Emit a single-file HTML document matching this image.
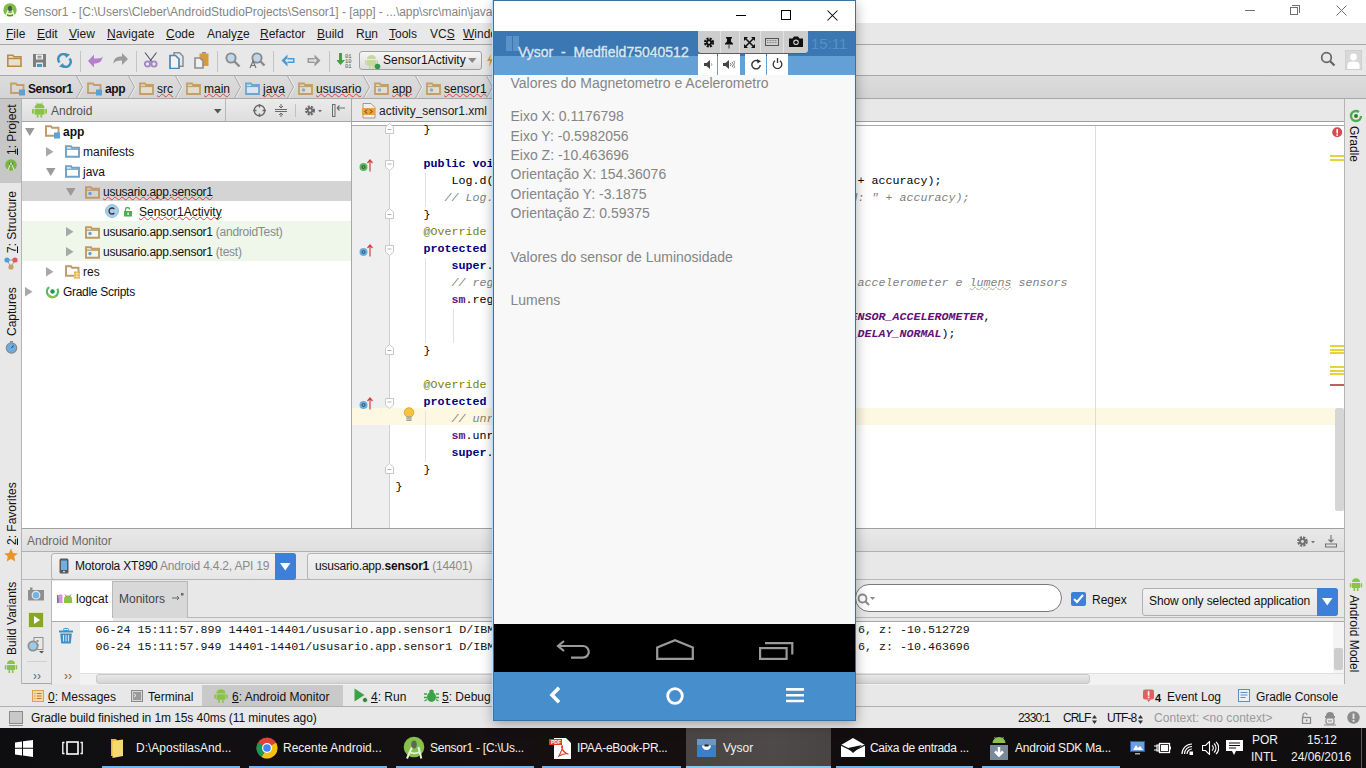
<!DOCTYPE html>
<html><head><meta charset="utf-8">
<style>
*{margin:0;padding:0;box-sizing:border-box}
html,body{width:1366px;height:768px;overflow:hidden;background:#e8e8e8;font-family:"Liberation Sans",sans-serif;font-size:12px;color:#000}
.a{position:absolute}
.t{position:absolute;white-space:pre;line-height:14px}
.u{text-decoration:underline}
.mono{font-family:"Liberation Mono",monospace}
</style></head><body>

<!-- ===== TITLE BAR ===== -->
<div class="a" id="title" style="left:0;top:0;width:1366px;height:23px;background:#fff">
  <svg class="a" style="left:2px;top:3px" width="16" height="16" viewBox="0 0 23 23"><circle cx="11.5" cy="10" r="9.6" fill="#7fbf45"/><path d="M11.5 4c-1.8 0-2.8 1.4-2.8 3.2v4.3h5.6V7.2c0-1.8-1-3.2-2.8-3.2z" fill="#4f5a48"/><path d="M9 10.5L4.5 21M14.5 10.5L18.5 21" stroke="#eef5e6" stroke-width="2"/><path d="M7 14.5Q11.5 17 16.3 14.5" stroke="#eef5e6" stroke-width="2" fill="none"/><path d="M7.5 16Q11.5 18.5 15.5 16v2.5h-8z" fill="#5a6652"/></svg>
  <div class="t" style="left:24px;top:5px;color:#858585;letter-spacing:-0.05px">Sensor1 - [C:\Users\Cleber\AndroidStudioProjects\Sensor1] - [app] - ...\app\src\main\java\ususario\app\sensor1\Sensor1Activity.java - Android Studio 2.1.2</div>
  <div class="a" style="left:1245px;top:10px;width:10px;height:1px;background:#707070"></div>
  <div class="a" style="left:1290px;top:7px;width:8px;height:8px;border:1px solid #707070"></div>
  <div class="a" style="left:1292px;top:5px;width:8px;height:8px;border-top:1px solid #707070;border-right:1px solid #707070"></div>
  <svg class="a" style="left:1336px;top:5px" width="11" height="11"><path d="M0.5 0.5L10.5 10.5M10.5 0.5L0.5 10.5" stroke="#707070" stroke-width="1"/></svg>
</div>

<!-- ===== MENU BAR ===== -->
<div class="a" id="menu" style="left:0;top:23px;width:1366px;height:22px;background:#e8e8e8;border-bottom:1px solid #a8a8a8">
  <div class="t" style="left:6px;top:4px;color:#1a1a1a"><span class="u">F</span>ile</div>
  <div class="t" style="left:37px;top:4px;color:#1a1a1a"><span class="u">E</span>dit</div>
  <div class="t" style="left:69px;top:4px;color:#1a1a1a"><span class="u">V</span>iew</div>
  <div class="t" style="left:107px;top:4px;color:#1a1a1a"><span class="u">N</span>avigate</div>
  <div class="t" style="left:166px;top:4px;color:#1a1a1a"><span class="u">C</span>ode</div>
  <div class="t" style="left:207px;top:4px;color:#1a1a1a">Analy<span class="u">z</span>e</div>
  <div class="t" style="left:260px;top:4px;color:#1a1a1a"><span class="u">R</span>efactor</div>
  <div class="t" style="left:317px;top:4px;color:#1a1a1a"><span class="u">B</span>uild</div>
  <div class="t" style="left:356px;top:4px;color:#1a1a1a">R<span class="u">u</span>n</div>
  <div class="t" style="left:389px;top:4px;color:#1a1a1a"><span class="u">T</span>ools</div>
  <div class="t" style="left:430px;top:4px;color:#1a1a1a">VC<span class="u">S</span></div>
  <div class="t" style="left:463px;top:4px;color:#1a1a1a"><span class="u">W</span>indow</div>
</div>

<!-- ===== TOOLBAR ===== -->
<div class="a" id="toolbar" style="left:0;top:45px;width:1366px;height:31px;background:#e8e8e8;border-bottom:1px solid #a8a8a8">
  <!-- open -->
  <svg class="a" style="left:7px;top:9px" width="15" height="13"><path d="M0.8 1.2h5l1.2 1.6h7v9.4H0.8z" fill="#eadfc8" stroke="#b88c48" stroke-width="1.6"/><path d="M1 4.5h13" stroke="#b88c48" stroke-width="1.4"/></svg>
  <!-- save -->
  <svg class="a" style="left:33px;top:9px" width="13" height="13"><rect x="0" y="0" width="13" height="13" fill="#7d7d7d"/><rect x="3" y="0.5" width="7" height="5" fill="#f2f2f2"/><rect x="4.5" y="1.8" width="4" height="1" fill="#7d7d7d"/><rect x="4.5" y="3.4" width="4" height="1" fill="#7d7d7d"/><rect x="3" y="8.5" width="7" height="4.5" fill="#e8e8e8"/><rect x="4" y="10" width="5" height="3" fill="#4f97b5"/></svg>
  <!-- sync -->
  <svg class="a" style="left:57px;top:8px" width="15" height="15"><path d="M2.5 9.5A5 5 0 0 1 9.5 2.4" stroke="#3f90c0" stroke-width="2.6" fill="none"/><path d="M12.5 5.5A5 5 0 0 1 5.5 12.6" stroke="#3f90c0" stroke-width="2.6" fill="none"/><path d="M8 0l5 1.5-4 3.5z" fill="#3f90c0"/><path d="M7 15l-5-1.5 4-3.5z" fill="#3f90c0"/></svg>
  <div class="a" style="left:80px;top:6px;width:1px;height:21px;background:#c4c4c4"></div>
  <!-- undo -->
  <svg class="a" style="left:88px;top:9px" width="15" height="13"><path d="M0 7l6-6.5v4c5 0 8 0 8.5-2.5c0 5-3 7.5-8.5 7.5v4z" fill="#b47fcf"/></svg>
  <!-- redo -->
  <svg class="a" style="left:113px;top:8px" width="15" height="13"><path d="M15 6l-6-6v3.5C4 3.5 0.5 5 0.5 11C2 8 4.5 7.5 9 7.5V12z" fill="#9b9b9b"/></svg>
  <div class="a" style="left:136px;top:6px;width:1px;height:21px;background:#c4c4c4"></div>
  <!-- cut -->
  <svg class="a" style="left:143px;top:7px" width="16" height="16"><path d="M2 0.5L9.5 10.5M13.5 0.5L6 10.5" stroke="#555" stroke-width="1.1"/><circle cx="4.5" cy="12" r="2.6" fill="none" stroke="#a486c6" stroke-width="1.9"/><circle cx="11" cy="12" r="2.6" fill="none" stroke="#a486c6" stroke-width="1.9"/></svg>
  <!-- copy -->
  <svg class="a" style="left:169px;top:7px" width="15" height="17"><path d="M5 0.8h5.5l3.5 3.5v10h-9z" fill="#e8e8e8" stroke="#8d8d8d" stroke-width="1.5"/><path d="M1 3.5h5.5l3.5 3.5v9.5H1z" fill="#f2f2f2" stroke="#4a86b8" stroke-width="1.7"/></svg>
  <!-- paste -->
  <svg class="a" style="left:194px;top:7px" width="15" height="17"><rect x="5.5" y="1.5" width="9" height="12.5" fill="#d69b3c"/><rect x="8" y="0" width="4" height="1.5" fill="#8d8d8d"/><path d="M1 6h5l3 3v7H1z" fill="#f0f0f0" stroke="#8d8d8d" stroke-width="1.6"/></svg>
  <div class="a" style="left:217px;top:6px;width:1px;height:21px;background:#c4c4c4"></div>
  <!-- find -->
  <svg class="a" style="left:225px;top:7px" width="16" height="16"><circle cx="6" cy="6" r="4.6" fill="#bcd8ea" stroke="#8a8a8a" stroke-width="1.9"/><path d="M9.5 9.5L14.5 14.5" stroke="#8a8a8a" stroke-width="2.4"/></svg>
  <!-- replace -->
  <svg class="a" style="left:249px;top:7px" width="17" height="17"><circle cx="8" cy="6" r="4.6" fill="#bcd8ea" stroke="#8a8a8a" stroke-width="1.9"/><path d="M11.5 9.5L15.5 13.5" stroke="#8a8a8a" stroke-width="2.4"/><path d="M1 16L4 9l3 7M2.2 13.5h3.6" stroke="#707070" stroke-width="1.1" fill="none"/></svg>
  <div class="a" style="left:273px;top:6px;width:1px;height:21px;background:#c4c4c4"></div>
  <!-- back -->
  <svg class="a" style="left:281px;top:9px" width="14" height="13"><path d="M0.5 6.5L6.5 0.5v3.5h7v5h-7v3.5z" fill="#4b9bd0"/><path d="M4 6.5L6.5 4v1.5h5.5v2H6.5V9z" fill="#dfeaf3"/></svg>
  <!-- fwd -->
  <svg class="a" style="left:307px;top:9px" width="14" height="13"><path d="M13.5 6.5L7.5 0.5v3.5h-7v5h7v3.5z" fill="#9a9a9a"/><path d="M10 6.5L7.5 4v1.5H2v2h5.5V9z" fill="#e3e3e3"/></svg>
  <div class="a" style="left:329px;top:6px;width:1px;height:21px;background:#c4c4c4"></div>
  <!-- make -->
  <svg class="a" style="left:337px;top:8px" width="16" height="15"><path d="M2 0h3v7h3l-4.5 5L-1 7h3z" fill="#3aa346"/><text x="8" y="5" font-family="Liberation Mono" font-size="5.5" fill="#555">01</text><text x="8" y="10" font-family="Liberation Mono" font-size="5.5" fill="#555">10</text><text x="8" y="15" font-family="Liberation Mono" font-size="5.5" fill="#555">01</text></svg>
  <!-- run config combo -->
  <div class="a" style="left:359px;top:6px;width:123px;height:19px;border:1px solid #a0a0a0;border-radius:3px;background:linear-gradient(#f6f6f6,#dedede)"></div>
  <svg class="a" style="left:365px;top:8px" width="17" height="17"><path d="M2 6a4.5 4 0 0 1 9 0z" fill="#c6d8a0"/><rect x="2" y="7" width="9" height="6" rx="1" fill="#c6d8a0"/><rect x="0" y="7" width="1.6" height="5" rx="0.8" fill="#c6d8a0"/><rect x="11.4" y="7" width="1.6" height="5" rx="0.8" fill="#c6d8a0"/><rect x="4" y="13" width="1.6" height="3" fill="#c6d8a0"/><rect x="7.4" y="13" width="1.6" height="3" fill="#c6d8a0"/><circle cx="12.5" cy="13.5" r="2.8" fill="#2f9a48"/></svg>
  <div class="t" style="left:383px;top:8px;color:#111">Sensor1Activity</div>
  <svg class="a" style="left:468px;top:13px" width="9" height="6"><path d="M0 0h8.5L4.25 5z" fill="#8a8a8a"/></svg>
  <svg class="a" style="left:486px;top:9px" width="8" height="13"><path d="M5 0L1 7h3l-1 6 4-8H4z" fill="#e0a030"/></svg>
  <!-- right side -->
  <svg class="a" style="left:1320px;top:6px" width="16" height="16"><circle cx="6.5" cy="6.5" r="4.8" fill="none" stroke="#666" stroke-width="1.7"/><path d="M10 10L14.5 14.5" stroke="#666" stroke-width="2.2"/></svg>
  <div class="a" style="left:1345px;top:5px;width:17px;height:20px;background:#d8d8d8;border:1px solid #cfcfcf"></div>
  <svg class="a" style="left:1346px;top:7px" width="15" height="17"><circle cx="7.5" cy="5" r="3.4" fill="#fff"/><path d="M1.5 17v-4c0-2.5 2-3.5 6-3.5s6 1 6 3.5v4z" fill="#fff"/></svg>
</div>

<!-- ===== BREADCRUMB ===== -->
<div class="a" id="crumbs" style="left:0;top:76px;width:1366px;height:23px;background:linear-gradient(#dcdcdc,#d4d4d4);border-bottom:1px solid #a8a8a8">
  <svg class="a" style="left:10px;top:6px" width="16" height="14"><path d="M1 1.5h5l1 1.5h6.5v8H1z" fill="none" stroke="#c39f6b" stroke-width="1.8"/><rect x="9" y="7.5" width="6" height="6" fill="#5aa2d4"/></svg>
  <div class="t" style="left:28px;top:6px;color:#111;font-weight:bold;letter-spacing:-0.4px;">Sensor1</div>
  <svg class="a" style="left:76px;top:0" width="9" height="22"><path d="M0.5 0L6.5 11L0.5 22" stroke="#a9a9a9" stroke-width="1" fill="none"/><path d="M1.8 0L7.8 11L1.8 22" stroke="#eaeaea" stroke-width="1" fill="none"/></svg>
  <svg class="a" style="left:87px;top:6px" width="16" height="14"><path d="M1 1.5h5l1 1.5h6.5v8H1z" fill="none" stroke="#c39f6b" stroke-width="1.8"/><rect x="9" y="7.5" width="6" height="6" fill="#5aa2d4"/></svg>
  <div class="t" style="left:105px;top:6px;color:#111;font-weight:bold;letter-spacing:-0.4px;">app</div>
  <svg class="a" style="left:128px;top:0" width="9" height="22"><path d="M0.5 0L6.5 11L0.5 22" stroke="#a9a9a9" stroke-width="1" fill="none"/><path d="M1.8 0L7.8 11L1.8 22" stroke="#eaeaea" stroke-width="1" fill="none"/></svg>
  <svg class="a" style="left:139px;top:6px" width="16" height="14"><path d="M1 1.5h5l1 1.5h7v9H1z" fill="#e3dcd0" stroke="#c39f6b" stroke-width="1.8"/><path d="M1 4.5h13" stroke="#c39f6b" stroke-width="1.2"/></svg>
  <div class="t" style="left:157px;top:6px;color:#111;text-decoration:underline wavy #e04040;text-decoration-thickness:1px;text-underline-offset:0px;text-decoration-skip-ink:none;">src</div>
  <svg class="a" style="left:175px;top:0" width="9" height="22"><path d="M0.5 0L6.5 11L0.5 22" stroke="#a9a9a9" stroke-width="1" fill="none"/><path d="M1.8 0L7.8 11L1.8 22" stroke="#eaeaea" stroke-width="1" fill="none"/></svg>
  <svg class="a" style="left:186px;top:6px" width="16" height="14"><path d="M1 1.5h5l1 1.5h7v9H1z" fill="#e3dcd0" stroke="#c39f6b" stroke-width="1.8"/><path d="M1 4.5h13" stroke="#c39f6b" stroke-width="1.2"/></svg>
  <div class="t" style="left:204px;top:6px;color:#111;text-decoration:underline wavy #e04040;text-decoration-thickness:1px;text-underline-offset:0px;text-decoration-skip-ink:none;">main</div>
  <svg class="a" style="left:234px;top:0" width="9" height="22"><path d="M0.5 0L6.5 11L0.5 22" stroke="#a9a9a9" stroke-width="1" fill="none"/><path d="M1.8 0L7.8 11L1.8 22" stroke="#eaeaea" stroke-width="1" fill="none"/></svg>
  <svg class="a" style="left:245px;top:6px" width="16" height="14"><path d="M1 1.5h5l1 1.5h7v9H1z" fill="#dde6ee" stroke="#6fa5cf" stroke-width="1.8"/><path d="M1 4.5h13" stroke="#6fa5cf" stroke-width="1.2"/></svg>
  <div class="t" style="left:263px;top:6px;color:#111;text-decoration:underline wavy #e04040;text-decoration-thickness:1px;text-underline-offset:0px;text-decoration-skip-ink:none;">java</div>
  <svg class="a" style="left:287px;top:0" width="9" height="22"><path d="M0.5 0L6.5 11L0.5 22" stroke="#a9a9a9" stroke-width="1" fill="none"/><path d="M1.8 0L7.8 11L1.8 22" stroke="#eaeaea" stroke-width="1" fill="none"/></svg>
  <svg class="a" style="left:298px;top:6px" width="16" height="14"><path d="M1 1.5h5l1 1.5h7v9H1z" fill="#e3dcd0" stroke="#c39f6b" stroke-width="1.8"/><path d="M1 4.5h13" stroke="#c39f6b" stroke-width="1.2"/><circle cx="5.5" cy="8" r="1.8" fill="#7fb0d8"/></svg>
  <div class="t" style="left:316px;top:6px;color:#111;text-decoration:underline wavy #e04040;text-decoration-thickness:1px;text-underline-offset:0px;text-decoration-skip-ink:none;">ususario</div>
  <svg class="a" style="left:363px;top:0" width="9" height="22"><path d="M0.5 0L6.5 11L0.5 22" stroke="#a9a9a9" stroke-width="1" fill="none"/><path d="M1.8 0L7.8 11L1.8 22" stroke="#eaeaea" stroke-width="1" fill="none"/></svg>
  <svg class="a" style="left:374px;top:6px" width="16" height="14"><path d="M1 1.5h5l1 1.5h7v9H1z" fill="#e3dcd0" stroke="#c39f6b" stroke-width="1.8"/><path d="M1 4.5h13" stroke="#c39f6b" stroke-width="1.2"/><circle cx="5.5" cy="8" r="1.8" fill="#7fb0d8"/></svg>
  <div class="t" style="left:392px;top:6px;color:#111;text-decoration:underline wavy #e04040;text-decoration-thickness:1px;text-underline-offset:0px;text-decoration-skip-ink:none;">app</div>
  <svg class="a" style="left:415px;top:0" width="9" height="22"><path d="M0.5 0L6.5 11L0.5 22" stroke="#a9a9a9" stroke-width="1" fill="none"/><path d="M1.8 0L7.8 11L1.8 22" stroke="#eaeaea" stroke-width="1" fill="none"/></svg>
  <svg class="a" style="left:426px;top:6px" width="16" height="14"><path d="M1 1.5h5l1 1.5h7v9H1z" fill="#e3dcd0" stroke="#c39f6b" stroke-width="1.8"/><path d="M1 4.5h13" stroke="#c39f6b" stroke-width="1.2"/><circle cx="5.5" cy="8" r="1.8" fill="#7fb0d8"/></svg>
  <div class="t" style="left:444px;top:6px;color:#111;text-decoration:underline wavy #e04040;text-decoration-thickness:1px;text-underline-offset:0px;text-decoration-skip-ink:none;">sensor1</div>
  <svg class="a" style="left:486px;top:0" width="9" height="22"><path d="M0.5 0L6.5 11L0.5 22" stroke="#a9a9a9" stroke-width="1" fill="none"/><path d="M1.8 0L7.8 11L1.8 22" stroke="#eaeaea" stroke-width="1" fill="none"/></svg>
</div>

<!-- ===== LEFT STRIP ===== -->
<div class="a" id="lstrip" style="left:0;top:99px;width:22px;height:585px;background:#e8e8e8;border-right:1px solid #b4b4b4">
  <div class="a" style="left:0;top:0;width:21px;height:84px;background:#c7c7c7"></div>
  <div class="t" style="left:5px;top:56px;width:47px;transform:rotate(-90deg);transform-origin:0 0;color:#111"><span class="u">1</span>: Project</div>
  <svg class="a" style="left:5px;top:60px" width="12" height="12"><circle cx="6" cy="6" r="5.8" fill="#78b640"/><circle cx="6" cy="4.8" r="1.9" fill="#4a4f45"/><path d="M2.8 11.5L6 3.5l3.2 8" stroke="#e8f0e0" stroke-width="1" fill="none"/></svg>
  <div class="t" style="left:5px;top:154px;width:60px;transform:rotate(-90deg);transform-origin:0 0;color:#111"><span class="u">7</span>: Structure</div>
  <svg class="a" style="left:4px;top:157px" width="14" height="14"><path d="M3 4L11 4M3 4L7 11M11 4L7 11" stroke="#a0a0a0" stroke-width="1"/><circle cx="3" cy="4" r="2.6" fill="#4f9fd8"/><circle cx="11" cy="4" r="2.6" fill="#e05a5a"/><circle cx="7" cy="11" r="2.6" fill="#c8a060"/></svg>
  <div class="t" style="left:5px;top:237px;width:46px;transform:rotate(-90deg);transform-origin:0 0;color:#111">Captures</div>
  <svg class="a" style="left:5px;top:242px" width="13" height="13"><circle cx="6.5" cy="7" r="5.2" fill="#6aaee0" stroke="#8a8a8a" stroke-width="1.2"/><path d="M6.5 7L8.5 4.5" stroke="#333" stroke-width="1"/><rect x="5" y="0" width="3" height="1.5" fill="#8a8a8a"/></svg>
  <div class="t" style="left:5px;top:446px;width:60px;transform:rotate(-90deg);transform-origin:0 0;color:#111"><span class="u">2</span>: Favorites</div>
  <svg class="a" style="left:4px;top:449px" width="14" height="14"><path d="M7 0.5l2 4.5 4.8.4-3.6 3.2 1.1 4.8L7 10.9l-4.3 2.5 1.1-4.8L0.2 5.4 5 5z" fill="#e8952e"/></svg>
  <div class="t" style="left:5px;top:556px;width:72px;transform:rotate(-90deg);transform-origin:0 0;color:#111">Build Variants</div>
  <svg class="a" style="left:4px;top:560px" width="14" height="14"><path d="M3 5a4 3.8 0 0 1 8 0z" fill="#8bc34a"/><rect x="3" y="6" width="8" height="5" fill="#8bc34a"/><rect x="0.8" y="6" width="1.6" height="4.5" rx="0.8" fill="#8bc34a"/><rect x="11.6" y="6" width="1.6" height="4.5" rx="0.8" fill="#8bc34a"/><rect x="4.5" y="11" width="1.6" height="3" fill="#8bc34a"/><rect x="7.9" y="11" width="1.6" height="3" fill="#8bc34a"/></svg>
</div>

<!-- ===== RIGHT STRIP ===== -->
<div class="a" id="rstrip" style="left:1344px;top:99px;width:22px;height:585px;background:#e8e8e8;border-left:1px solid #b4b4b4">
  <svg class="a" style="left:4px;top:10px" width="14" height="14"><circle cx="7" cy="7" r="5" fill="none" stroke="#4cae4f" stroke-width="2.4" stroke-dasharray="26 5"/><circle cx="7" cy="7" r="2" fill="#2e7d32"/></svg>
  <div class="t" style="left:16px;top:27px;width:34px;transform:rotate(90deg);transform-origin:0 0;color:#111">Gradle</div>
  <svg class="a" style="left:4px;top:478px" width="14" height="14"><path d="M3 5a4 3.8 0 0 1 8 0z" fill="#8bc34a"/><rect x="3" y="6" width="8" height="5" fill="#8bc34a"/><rect x="0.8" y="6" width="1.6" height="4.5" rx="0.8" fill="#8bc34a"/><rect x="11.6" y="6" width="1.6" height="4.5" rx="0.8" fill="#8bc34a"/><rect x="4.5" y="11" width="1.6" height="3" fill="#8bc34a"/><rect x="7.9" y="11" width="1.6" height="3" fill="#8bc34a"/></svg>
  <div class="t" style="left:16px;top:496px;width:74px;transform:rotate(90deg);transform-origin:0 0;color:#111">Android Model</div>
</div>

<!-- ===== PROJECT PANEL ===== -->
<div class="a" id="proj" style="left:22px;top:99px;width:330px;height:429px;background:#fff;border-right:1px solid #a8a8a8">
  <div class="a" style="left:0;top:0;width:329px;height:23px;background:linear-gradient(#ebebeb,#dedede);border-bottom:1px solid #a8a8a8"></div>
  <div class="a" style="left:203px;top:0;width:1px;height:22px;background:#b8b8b8"></div>
  <svg class="a" style="left:10px;top:3px" width="15" height="16"><path d="M2.5 6a5 4.6 0 0 1 10 0z" fill="#8bc34a"/><rect x="2.5" y="6.8" width="10" height="6" rx="0.8" fill="#8bc34a"/><rect x="0" y="6.8" width="1.8" height="5" rx="0.9" fill="#8bc34a"/><rect x="13.2" y="6.8" width="1.8" height="5" rx="0.9" fill="#8bc34a"/><rect x="4.8" y="12.5" width="1.8" height="3" fill="#8bc34a"/><rect x="8.4" y="12.5" width="1.8" height="3" fill="#8bc34a"/><path d="M4.5 0.5L5.5 2M10.5 0.5L9.5 2" stroke="#8bc34a" stroke-width="0.8"/></svg>
  <div class="t" style="left:29px;top:5px;color:#505050">Android</div>
  <svg class="a" style="left:192px;top:10px" width="8" height="5"><path d="M0 0h7.5L3.75 4.5z" fill="#555"/></svg>
  <svg class="a" style="left:231px;top:5px" width="13" height="13"><circle cx="6.5" cy="6.5" r="5.3" fill="none" stroke="#6a6a6a" stroke-width="1.4"/><path d="M6.5 0v3.5M6.5 9.5V13M0 6.5h3.5M9.5 6.5H13" stroke="#6a6a6a" stroke-width="1.4"/></svg>
  <svg class="a" style="left:253px;top:5px" width="12" height="13"><path d="M0 5.5h12M0 7.5h12" stroke="#6a6a6a" stroke-width="1"/><path d="M6 0v4M4 2l2 2 2-2M6 13V9M4 11l2-2 2 2" stroke="#6a6a6a" stroke-width="1" fill="none"/></svg>
  <div class="a" style="left:273px;top:5px;width:1px;height:13px;background:#c0c0c0"></div>
  <svg class="a" style="left:282px;top:5px" width="18" height="13"><circle cx="6" cy="6.5" r="3.6" fill="none" stroke="#6a6a6a" stroke-width="2.8" stroke-dasharray="1.9 1"/><circle cx="6" cy="6.5" r="3" fill="#6a6a6a"/><circle cx="6" cy="6.5" r="1.3" fill="#e4e4e4"/><path d="M14 6h4l-2 2.2z" fill="#6a6a6a"/></svg>
  <svg class="a" style="left:310px;top:5px" width="13" height="13"><rect x="0.5" y="0.5" width="2.5" height="12" fill="none" stroke="#6a6a6a" stroke-width="1"/><path d="M5 4h8M5 4l2.5-2.5M5 4l2.5 2.5" stroke="#6a6a6a" stroke-width="1.1" fill="none"/></svg>
  <div class="a" style="left:0;top:82px;width:329px;height:20px;background:#d4d4d4"></div>
  <div class="a" style="left:0;top:122px;width:329px;height:40px;background:#eff6ea"></div>
  <svg class="a" style="left:3px;top:29px" width="10" height="8"><path d="M0 0h9.5L4.75 8z" fill="#9a9a9a"/></svg><svg class="a" style="left:23px;top:26px" width="16" height="14"><path d="M1 1.2h5l1 1.5h6.5v8H1z" fill="none" stroke="#bf9a68" stroke-width="1.9"/><rect x="9" y="7.5" width="6" height="6" fill="#5aa2d4"/></svg><div class="t" style="left:41px;top:26px;color:#111;font-weight:bold">app</div>
  <svg class="a" style="left:24px;top:48px" width="8" height="10"><path d="M0 0v9.5L7.5 4.75z" fill="#a8a8a8"/></svg><svg class="a" style="left:43px;top:46px" width="15" height="13"><path d="M1 1.2h5l1 1.5h7v9H1z" fill="none" stroke="#6fa2c8" stroke-width="1.9"/><path d="M1 4.2h13" stroke="#6fa2c8" stroke-width="1.3"/></svg><div class="t" style="left:61px;top:46px;color:#111;">manifests</div>
  <svg class="a" style="left:24px;top:69px" width="10" height="8"><path d="M0 0h9.5L4.75 8z" fill="#9a9a9a"/></svg><svg class="a" style="left:43px;top:66px" width="15" height="13"><path d="M1 1.2h5l1 1.5h7v9H1z" fill="none" stroke="#6fa2c8" stroke-width="1.9"/><path d="M1 4.2h13" stroke="#6fa2c8" stroke-width="1.3"/></svg><div class="t" style="left:61px;top:66px;color:#111;">java</div>
  <svg class="a" style="left:44px;top:89px" width="10" height="8"><path d="M0 0h9.5L4.75 8z" fill="#9a9a9a"/></svg><svg class="a" style="left:63px;top:87px" width="15" height="13"><path d="M1 1.2h5l1 1.5h7v9H1z" fill="none" stroke="#bf9a68" stroke-width="1.9"/><path d="M1 4.2h13" stroke="#bf9a68" stroke-width="1.3"/><circle cx="5" cy="7.5" r="1.7" fill="#5e9fd3"/></svg><div class="t" style="left:81px;top:86px;color:#111;text-decoration:underline wavy #e04040;text-decoration-thickness:1px;text-underline-offset:0px;text-decoration-skip-ink:none;letter-spacing:-0.25px">ususario.app.sensor1</div>
  <svg class="a" style="left:83px;top:105px" width="14" height="14"><circle cx="7" cy="7" r="6.5" fill="#a7cdef" stroke="#8ab4d8" stroke-width="0.8"/><path d="M9.3 5A3 3 0 1 0 9.3 9" stroke="#333" stroke-width="1.3" fill="none"/></svg><svg class="a" style="left:101px;top:108px" width="10" height="10"><path d="M2.5 4V2.5A2 2 0 0 1 6.5 2.5" stroke="#4caf50" stroke-width="1.3" fill="none"/><rect x="1" y="4" width="8" height="5.5" fill="#4caf50"/><rect x="4.5" y="5.5" width="1.2" height="2.5" fill="#fff"/></svg><div class="t" style="left:117px;top:106px;color:#111;text-decoration:underline wavy #e04040;text-decoration-thickness:1px;text-underline-offset:0px;text-decoration-skip-ink:none;">Sensor1Activity</div>
  <svg class="a" style="left:44px;top:128px" width="8" height="10"><path d="M0 0v9.5L7.5 4.75z" fill="#a8a8a8"/></svg><svg class="a" style="left:63px;top:127px" width="15" height="13"><path d="M1 1.2h5l1 1.5h7v9H1z" fill="none" stroke="#bf9a68" stroke-width="1.9"/><path d="M1 4.2h13" stroke="#bf9a68" stroke-width="1.3"/><circle cx="5" cy="7.5" r="1.7" fill="#5e9fd3"/></svg><div class="t" style="left:81px;top:126px;color:#111;letter-spacing:-0.25px">ususario.app.sensor1<span style="color:#8a8a8a"> (androidTest)</span></div>
  <svg class="a" style="left:44px;top:148px" width="8" height="10"><path d="M0 0v9.5L7.5 4.75z" fill="#a8a8a8"/></svg><svg class="a" style="left:63px;top:147px" width="15" height="13"><path d="M1 1.2h5l1 1.5h7v9H1z" fill="none" stroke="#bf9a68" stroke-width="1.9"/><path d="M1 4.2h13" stroke="#bf9a68" stroke-width="1.3"/><circle cx="5" cy="7.5" r="1.7" fill="#5e9fd3"/></svg><div class="t" style="left:81px;top:146px;color:#111;letter-spacing:-0.25px">ususario.app.sensor1<span style="color:#8a8a8a"> (test)</span></div>
  <svg class="a" style="left:24px;top:168px" width="8" height="10"><path d="M0 0v9.5L7.5 4.75z" fill="#a8a8a8"/></svg><svg class="a" style="left:43px;top:166px" width="16" height="14"><path d="M1 1.2h5l1 1.5h6.5v8H1z" fill="none" stroke="#bf9a68" stroke-width="1.9"/><rect x="9" y="6.5" width="6" height="7" fill="#e0b030"/><path d="M9 9h6M9 11.3h6M12 6.5v7" stroke="#fff6d0" stroke-width="0.7"/></svg><div class="t" style="left:61px;top:166px;color:#111;">res</div>
  <svg class="a" style="left:3px;top:188px" width="8" height="10"><path d="M0 0v9.5L7.5 4.75z" fill="#a8a8a8"/></svg><svg class="a" style="left:23px;top:185px" width="15" height="15"><circle cx="7.5" cy="7.5" r="5.6" fill="none" stroke="#5cb85c" stroke-width="2.2" stroke-dasharray="25 10" transform="rotate(-30 7.5 7.5)"/><path d="M3 11A5.6 5.6 0 0 0 11 12" stroke="#8bc34a" stroke-width="2.2" fill="none"/><circle cx="7.5" cy="7.5" r="2.2" fill="#1a9a4a"/></svg><div class="t" style="left:41px;top:186px;color:#111;letter-spacing:-0.3px">Gradle Scripts</div>
</div>

<!-- ===== EDITOR ===== -->
<div class="a" id="editor" style="left:352px;top:99px;width:992px;height:429px;background:#fff">
  <div class="a" style="left:0;top:0;width:992px;height:23px;background:#e8e8e8;border-bottom:1px solid #a0a0a0"></div>
  <svg class="a" style="left:10px;top:4px" width="14" height="16"><path d="M1 0.5h8l4 4V15H1z" fill="#f0f0f0" stroke="#9a9a9a" stroke-width="1"/><rect x="0" y="5" width="13" height="7" fill="#e8a33c"/><path d="M5 6.5L3 8.5 5 10.5M8 6.5l2 2-2 2" stroke="#333" stroke-width="1" fill="none"/></svg>
  <div class="t" style="left:27px;top:5px;color:#222">activity_sensor1.xml</div>
  <div class="a" style="left:0;top:26px;width:992px;height:1px;background:#a8a8a8"></div>
  <div class="a" style="left:0;top:27px;width:37px;height:402px;background:#efefef"></div>
  <div class="a" style="left:37px;top:27px;width:1px;height:402px;background:#d0d0d0"></div>
  <div class="a" style="left:0;top:309px;width:983px;height:17px;background:#fdf8e2"></div>
  <div class="a" style="left:743px;top:27px;width:1px;height:402px;background:#dcdcdc"></div>
  <div class="a" style="left:101px;top:210px;width:1px;height:34px;background:#e2e2e2"></div>
  <div class="a" style="left:73px;top:74px;width:1px;height:34px;background:#e2e2e2"></div>
  <div class="a" style="left:73px;top:159px;width:1px;height:85px;background:#e2e2e2"></div>
  <div class="a" style="left:73px;top:312px;width:1px;height:51px;background:#e2e2e2"></div>
  <svg class="a" style="left:33px;top:24px" width="10" height="11"><path d="M0.5 10.5h8V4L4.5 0.5 0.5 4z" fill="#fff" stroke="#c8c8c8"/><path d="M2.5 6.5h4" stroke="#b0b0b0"/></svg>
  <svg class="a" style="left:33px;top:61px" width="10" height="11"><path d="M0.5 0.5h8v6.5l-4 3.5-4-3.5z" fill="#fff" stroke="#c8c8c8"/><path d="M2.5 4h4" stroke="#b0b0b0"/></svg>
  <svg class="a" style="left:33px;top:109px" width="10" height="11"><path d="M0.5 10.5h8V4L4.5 0.5 0.5 4z" fill="#fff" stroke="#c8c8c8"/><path d="M2.5 6.5h4" stroke="#b0b0b0"/></svg>
  <svg class="a" style="left:33px;top:146px" width="10" height="11"><path d="M0.5 0.5h8v6.5l-4 3.5-4-3.5z" fill="#fff" stroke="#c8c8c8"/><path d="M2.5 4h4" stroke="#b0b0b0"/></svg>
  <svg class="a" style="left:33px;top:245px" width="10" height="11"><path d="M0.5 10.5h8V4L4.5 0.5 0.5 4z" fill="#fff" stroke="#c8c8c8"/><path d="M2.5 6.5h4" stroke="#b0b0b0"/></svg>
  <svg class="a" style="left:33px;top:299px" width="10" height="11"><path d="M0.5 0.5h8v6.5l-4 3.5-4-3.5z" fill="#fff" stroke="#c8c8c8"/><path d="M2.5 4h4" stroke="#b0b0b0"/></svg>
  <svg class="a" style="left:33px;top:364px" width="10" height="11"><path d="M0.5 10.5h8V4L4.5 0.5 0.5 4z" fill="#fff" stroke="#c8c8c8"/><path d="M2.5 6.5h4" stroke="#b0b0b0"/></svg>
  <svg class="a" style="left:7px;top:60px" width="14" height="13"><circle cx="4.5" cy="8" r="4" fill="#5cb85c"/><circle cx="4.5" cy="8" r="1.5" fill="none" stroke="#333" stroke-width="0.8"/><path d="M11 12.5V1.5M8.5 4l2.5-3 2.5 3" stroke="#d04040" stroke-width="1.2" fill="none"/></svg>
  <svg class="a" style="left:7px;top:145px" width="14" height="13"><circle cx="4.5" cy="8" r="4" fill="#6aaee0"/><circle cx="4.5" cy="8" r="1.5" fill="none" stroke="#333" stroke-width="0.8"/><path d="M11 12.5V1.5M8.5 4l2.5-3 2.5 3" stroke="#d04040" stroke-width="1.2" fill="none"/></svg>
  <svg class="a" style="left:7px;top:298px" width="14" height="13"><circle cx="4.5" cy="8" r="4" fill="#6aaee0"/><circle cx="4.5" cy="8" r="1.5" fill="none" stroke="#333" stroke-width="0.8"/><path d="M11 12.5V1.5M8.5 4l2.5-3 2.5 3" stroke="#d04040" stroke-width="1.2" fill="none"/></svg>
  <svg class="a" style="left:51px;top:308px" width="12" height="15"><circle cx="6" cy="5.5" r="4.8" fill="#f5c242" stroke="#d8a020" stroke-width="0.8"/><rect x="3.5" y="9.5" width="5" height="4.5" fill="#999"/><path d="M3.5 11h5M3.5 12.6h5" stroke="#ddd" stroke-width="0.7"/></svg>
  <div class="t mono" style="left:71.5px;top:23px;line-height:17px;font-size:11.667px;color:#000">}</div>
  <div class="t mono" style="left:71.5px;top:57px;line-height:17px;font-size:11.667px;color:#000080;font-weight:bold">public void</div>
  <div class="t mono" style="left:155.5px;top:57px;line-height:17px;font-size:11.667px;color:#000">onAccuracyChanged(Sensor sensor, </div>
  <div class="t mono" style="left:386.5px;top:57px;line-height:17px;font-size:11.667px;color:#000080;font-weight:bold">int</div>
  <div class="t mono" style="left:414.5px;top:57px;line-height:17px;font-size:11.667px;color:#000">accuracy) {</div>
  <div class="t mono" style="left:99.5px;top:74px;line-height:17px;font-size:11.667px;color:#000">Log.</div>
  <div class="t mono" style="left:127.5px;top:74px;line-height:17px;font-size:11.667px;color:#000">d</div>
  <div class="t mono" style="left:134.5px;top:74px;line-height:17px;font-size:11.667px;color:#000">(</div>
  <div class="t mono" style="left:141.5px;top:74px;line-height:17px;font-size:11.667px;color:#008000;font-weight:bold">"Sensor"</div>
  <div class="t mono" style="left:197.5px;top:74px;line-height:17px;font-size:11.667px;color:#000">, sensor.getName() + </div>
  <div class="t mono" style="left:351.5px;top:74px;line-height:17px;font-size:11.667px;color:#008000;font-weight:bold">"accuracy changed: "</div>
  <div class="t mono" style="left:505.5px;top:74px;line-height:17px;font-size:11.667px;color:#000">+ accuracy);</div>
  <div class="t mono" style="left:92.5px;top:91px;line-height:17px;font-size:11.667px;color:#808080;font-style:italic">// Log.d("Sensor", sensor.getName() + "</div><div class="t mono" style="left:456.5px;top:91px;line-height:17px;font-size:11.667px;color:#808080;font-style:italic">changed: " + accuracy);</div>
  <div class="t mono" style="left:71.5px;top:108px;line-height:17px;font-size:11.667px;color:#000">}</div>
  <div class="t mono" style="left:71.5px;top:125px;line-height:17px;font-size:11.667px;color:#808000">@Override</div>
  <div class="t mono" style="left:71.5px;top:142px;line-height:17px;font-size:11.667px;color:#000080;font-weight:bold">protected void</div>
  <div class="t mono" style="left:176.5px;top:142px;line-height:17px;font-size:11.667px;color:#000">onResume() {</div>
  <div class="t mono" style="left:99.5px;top:159px;line-height:17px;font-size:11.667px;color:#000080;font-weight:bold">super</div>
  <div class="t mono" style="left:134.5px;top:159px;line-height:17px;font-size:11.667px;color:#000">.onResume();</div>
  <div class="t mono" style="left:99.5px;top:176px;line-height:17px;font-size:11.667px;color:#808080;font-style:italic">// registering the listeners for the magnetic field,</div>
  <div class="t mono" style="left:505.5px;top:176px;line-height:17px;font-size:11.667px;color:#808080;font-style:italic">accelerometer e </div>
  <div class="t mono" style="left:617.5px;top:176px;line-height:17px;font-size:11.667px;color:#808080;font-style:italic;text-decoration:underline wavy #a8b4a0;text-decoration-thickness:1px;text-underline-offset:0px;text-decoration-skip-ink:none">lumens</div>
  <div class="t mono" style="left:659.5px;top:176px;line-height:17px;font-size:11.667px;color:#808080;font-style:italic"> sensors</div>
  <div class="t mono" style="left:99.5px;top:193px;line-height:17px;font-size:11.667px;color:#660e7a;font-weight:bold">sm</div>
  <div class="t mono" style="left:113.5px;top:193px;line-height:17px;font-size:11.667px;color:#000">.registerListener(</div>
  <div class="t mono" style="left:239.5px;top:193px;line-height:17px;font-size:11.667px;color:#000080;font-weight:bold">this</div>
  <div class="t mono" style="left:267.5px;top:193px;line-height:17px;font-size:11.667px;color:#000">, sm.getDefaultSensor(Sensor.</div>
  <div class="t mono" style="left:393.5px;top:210px;line-height:17px;font-size:11.667px;color:#000">SensorManager.</div>
  <div class="t mono" style="left:491.5px;top:210px;line-height:17px;font-size:11.667px;color:#660e7a;font-weight:bold;font-style:italic">SENSOR_ACCELEROMETER</div>
  <div class="t mono" style="left:631.5px;top:210px;line-height:17px;font-size:11.667px;color:#000">,</div>
  <div class="t mono" style="left:351.5px;top:227px;line-height:17px;font-size:11.667px;color:#000">SensorManager.</div>
  <div class="t mono" style="left:456.5px;top:227px;line-height:17px;font-size:11.667px;color:#660e7a;font-weight:bold;font-style:italic">SENSOR_DELAY_NORMAL</div>
  <div class="t mono" style="left:589.5px;top:227px;line-height:17px;font-size:11.667px;color:#000">);</div>
  <div class="t mono" style="left:71.5px;top:244px;line-height:17px;font-size:11.667px;color:#000">}</div>
  <div class="t mono" style="left:71.5px;top:278px;line-height:17px;font-size:11.667px;color:#808000">@Override</div>
  <div class="t mono" style="left:71.5px;top:295px;line-height:17px;font-size:11.667px;color:#000080;font-weight:bold">protected void</div>
  <div class="t mono" style="left:176.5px;top:295px;line-height:17px;font-size:11.667px;color:#000">onPause() {</div>
  <div class="t mono" style="left:99.5px;top:312px;line-height:17px;font-size:11.667px;color:#808080;font-style:italic">// unregister listener</div>
  <div class="t mono" style="left:99.5px;top:329px;line-height:17px;font-size:11.667px;color:#660e7a;font-weight:bold">sm</div>
  <div class="t mono" style="left:113.5px;top:329px;line-height:17px;font-size:11.667px;color:#000">.unregisterListener(</div>
  <div class="t mono" style="left:253.5px;top:329px;line-height:17px;font-size:11.667px;color:#000080;font-weight:bold">this</div>
  <div class="t mono" style="left:281.5px;top:329px;line-height:17px;font-size:11.667px;color:#000">);</div>
  <div class="t mono" style="left:99.5px;top:346px;line-height:17px;font-size:11.667px;color:#000080;font-weight:bold">super</div>
  <div class="t mono" style="left:134.5px;top:346px;line-height:17px;font-size:11.667px;color:#000">.onPause();</div>
  <div class="t mono" style="left:71.5px;top:363px;line-height:17px;font-size:11.667px;color:#000">}</div>
  <div class="t mono" style="left:43.5px;top:380px;line-height:17px;font-size:11.667px;color:#000">}</div>
  <svg class="a" style="left:980px;top:28px" width="11" height="11"><circle cx="5.2" cy="5.2" r="5" fill="#d05050"/><rect x="4.4" y="2" width="1.6" height="4.5" fill="#fff"/><rect x="4.4" y="7.3" width="1.6" height="1.6" fill="#fff"/></svg>
  <div class="a" style="left:978px;top:56px;width:14px;height:2px;background:#e8d23a"></div>
  <div class="a" style="left:978px;top:60px;width:14px;height:2px;background:#e8d23a"></div>
  <div class="a" style="left:978px;top:246px;width:14px;height:2px;background:#e8d23a"></div>
  <div class="a" style="left:978px;top:249.5px;width:14px;height:2px;background:#e8d23a"></div>
  <div class="a" style="left:978px;top:253px;width:14px;height:2px;background:#e8d23a"></div>
  <div class="a" style="left:978px;top:267px;width:14px;height:2px;background:#e8d23a"></div>
  <div class="a" style="left:978px;top:270.5px;width:14px;height:2px;background:#e8d23a"></div>
  <div class="a" style="left:978px;top:274px;width:14px;height:2px;background:#e8d23a"></div>
  <div class="a" style="left:978px;top:285px;width:14px;height:2px;background:#c06060"></div>
  <div class="a" style="left:983px;top:309px;width:9px;height:103px;background:#d6d6d6;border-radius:2px"></div>
</div>

<!-- ===== ANDROID MONITOR ===== -->
<div class="a" id="mon" style="left:22px;top:528px;width:1322px;height:156px;background:#e8e8e8;border-top:1px solid #a0a0a0;border-bottom:1px solid #a8a8a8">
  <div class="a" style="left:0;top:0;width:1322px;height:23px;background:linear-gradient(#e9e9e9,#dfdfdf);border-bottom:1px solid #b0b0b0"></div>
  <div class="t" style="left:5px;top:5px;color:#6a6a6a">Android Monitor</div>
  <svg class="a" style="left:1274px;top:6px" width="22" height="13"><circle cx="6.5" cy="6.5" r="3.8" fill="none" stroke="#707070" stroke-width="3" stroke-dasharray="2 1"/><circle cx="6.5" cy="6.5" r="3.2" fill="#707070"/><circle cx="6.5" cy="6.5" r="1.4" fill="#e4e4e4"/><path d="M15 6h4l-2 2.2z" fill="#707070"/></svg>
  <svg class="a" style="left:1303px;top:6px" width="12" height="13"><path d="M6 0v7M3.5 4.5L6 7l2.5-2.5" stroke="#707070" stroke-width="1.1" fill="none"/><rect x="0.5" y="9" width="11" height="3" fill="none" stroke="#707070" stroke-width="1"/></svg>
  <div class="a" style="left:0;top:50px;width:1322px;height:1px;background:#b8b8b8"></div>
  <div class="a" style="left:29px;top:24px;width:245px;height:27px;background:linear-gradient(#f2f2f2,#e6e6e6);border:1px solid #b4b4b4;border-radius:3px"></div>
  <svg class="a" style="left:37px;top:29px" width="10" height="16"><rect x="0.5" y="0.5" width="9" height="15" rx="1.5" fill="#5a5a5a"/><rect x="2" y="2.5" width="6" height="9.5" fill="#6fb0e0"/><rect x="4" y="13" width="2" height="1.2" fill="#ddd"/></svg>
  <div class="t" style="left:53px;top:30px;color:#111;letter-spacing:-0.2px">Motorola XT890<span style="color:#8a8a8a"> Android 4.4.2, API 19</span></div>
  <div class="a" style="left:253px;top:24px;width:21px;height:27px;background:#3e7fd9;border-radius:0 3px 3px 0"></div>
  <svg class="a" style="left:258px;top:34px" width="11" height="8"><path d="M0 0h10.5L5.25 7.5z" fill="#fff"/></svg>
  <div class="a" style="left:285px;top:24px;width:300px;height:27px;background:linear-gradient(#f2f2f2,#e6e6e6);border:1px solid #b4b4b4;border-radius:3px"></div>
  <div class="t" style="left:293px;top:30px;color:#111;letter-spacing:-0.2px">ususario.app.<b>sensor1</b><span style="color:#8a8a8a"> (14401)</span></div>
  <div class="a" style="left:29px;top:51px;width:1px;height:105px;background:#b8b8b8"></div>
  <svg class="a" style="left:6px;top:58px" width="16" height="14"><rect x="0" y="3" width="16" height="10.5" fill="#8f8f8f"/><rect x="2" y="0.5" width="2.5" height="2.5" fill="#8f8f8f"/><circle cx="8" cy="8.2" r="3.8" fill="#6fb4e8" stroke="#e8e8e8" stroke-width="1.2"/></svg>
  <svg class="a" style="left:6px;top:83px" width="16" height="16"><rect x="0.5" y="0.5" width="15" height="15" fill="#8aa626" stroke="#d8e8b0" stroke-width="1"/><path d="M6 4v8l6-4z" fill="#fff"/></svg>
  <svg class="a" style="left:5px;top:108px" width="18" height="17"><rect x="7" y="0.5" width="9" height="12" fill="#e8e8e8" stroke="#8f8f8f"/><rect x="9.5" y="3" width="2" height="2" fill="#8f8f8f"/><rect x="9.5" y="7" width="2" height="2" fill="#8f8f8f"/><circle cx="6" cy="9" r="4.6" fill="#9ccbe8" stroke="#8f8f8f" stroke-width="1.8"/><path d="M12 14h5l-2.5 2.5z" fill="#555"/></svg>
  <div class="a" style="left:5px;top:132px;width:20px;height:1px;background:#d0d0d0"></div>
  <div class="t" style="left:11px;top:140px;color:#666;font-size:12px;letter-spacing:0px">&#8250;&#8250;</div>
  <div class="a" style="left:30px;top:52px;width:61px;height:41px;background:#fff"></div>
  <div class="a" style="left:90px;top:52px;width:76px;height:37px;background:#d8d8d8;border:1px solid #b8b8b8;border-bottom:none"></div>
  <div class="a" style="left:166px;top:88px;width:1156px;height:1px;background:#b8b8b8"></div>
  <div class="a" style="left:30px;top:92px;width:1292px;height:1px;background:#a8a8a8"></div>
  <svg class="a" style="left:35px;top:65px" width="16" height="10"><rect x="0" y="1" width="1.6" height="8" fill="#e04848"/><rect x="0" y="4" width="1.6" height="5" fill="#4a7ae0"/><rect x="2" y="0.5" width="3.5" height="8.5" fill="#e090e0"/><path d="M7 9V5a4 3.5 0 0 1 8 0v4z" fill="#8bc34a"/><path d="M8 0.5l1.5 2M14 0.5l-1.5 2" stroke="#e04848" stroke-width="0.8"/></svg>
  <div class="t" style="left:54px;top:63px;color:#111">logcat</div>
  <div class="t" style="left:97px;top:63px;color:#444">Monitors</div>
  <svg class="a" style="left:150px;top:64px" width="12" height="8"><path d="M0 5h7M5 3l2 2-2 2" stroke="#666" stroke-width="1" fill="none"/><rect x="9" y="0" width="2.5" height="2.5" fill="#666"/></svg>
  <div class="a" style="left:833px;top:55px;width:207px;height:28px;background:#fff;border:1px solid #7a7a7a;border-radius:14px"></div>
  <svg class="a" style="left:835px;top:64px" width="20" height="13"><circle cx="5.5" cy="5.5" r="4" fill="none" stroke="#8a8a8a" stroke-width="1.8"/><path d="M8.3 8.3L12 12" stroke="#8a8a8a" stroke-width="2"/><path d="M13 4h5l-2.5 3z" fill="#8a8a8a"/></svg>
  <div class="a" style="left:1049px;top:63px;width:15px;height:14px;background:#3d80d8;border-radius:2px"></div>
  <svg class="a" style="left:1051px;top:65px" width="11" height="10"><path d="M1 5l3 3 6-7" stroke="#fff" stroke-width="2" fill="none"/></svg>
  <div class="t" style="left:1070px;top:64px;color:#111">Regex</div>
  <div class="a" style="left:1120px;top:59px;width:196px;height:28px;background:linear-gradient(#f2f2f2,#e6e6e6);border:1px solid #b0b0b0;border-radius:3px"></div>
  <div class="t" style="left:1127px;top:65px;color:#111;letter-spacing:-0.1px">Show only selected application</div>
  <div class="a" style="left:1295px;top:59px;width:21px;height:28px;background:#3e7fd9;border-radius:0 3px 3px 0"></div>
  <svg class="a" style="left:1300px;top:69px" width="11" height="8"><path d="M0 0h10.5L5.25 7.5z" fill="#fff"/></svg>
  <div class="a" style="left:30px;top:93px;width:28px;height:62px;background:#ececec"></div>
  <svg class="a" style="left:37px;top:99px" width="14" height="16"><rect x="4.5" y="0.5" width="5" height="2" rx="1" fill="none" stroke="#3f8fc4" stroke-width="1"/><rect x="0" y="2.5" width="14" height="2" fill="#3f8fc4"/><path d="M1.2 5.5h11.6l-1 10H2.2z" fill="#3f8fc4"/><path d="M4.5 7v6.5M7 7v6.5M9.5 7v6.5" stroke="#cfe6f5" stroke-width="1.1"/></svg>
  <div class="t" style="left:42px;top:140px;color:#666;font-size:12px;letter-spacing:0px">&#8250;&#8250;</div>
  <div class="a" style="left:58px;top:93px;width:1264px;height:51px;background:#fff"></div>
  <div class="t mono" style="left:73.5px;top:93px;font-size:11.667px;line-height:17px;color:#111">06-24 15:11:57.899 14401-14401/ususario.app.sensor1 D/IBM: x: 0.1176798, y: -0.598205                        6, z: -10.512729</div>
  <div class="t mono" style="left:73.5px;top:110px;font-size:11.667px;line-height:17px;color:#111">06-24 15:11:57.949 14401-14401/ususario.app.sensor1 D/IBM: x: 0.1176798, y: -0.598205                        6, z: -10.463696</div>
  <div class="a" style="left:1311px;top:93px;width:11px;height:51px;background:#f4f4f4"></div>
  <div class="a" style="left:1312px;top:119px;width:9px;height:22px;background:#cdcdcd;border-radius:2px"></div>
  <div class="a" style="left:58px;top:144px;width:1264px;height:12px;background:#f2f2f2;border-top:1px solid #e0e0e0"></div>
  <div class="a" style="left:74px;top:145px;width:994px;height:10px;background:linear-gradient(#e8e8e8,#d4d4d4);border:1px solid #c8c8c8;border-radius:3px"></div>
</div>

<!-- ===== BOTTOM TOOL BUTTONS ===== -->
<div class="a" id="btools" style="left:0;top:685px;width:1366px;height:22px;background:#e8e8e8;border-bottom:1px solid #b0b0b0">
  <div class="a" style="left:202px;top:0;width:141px;height:21px;background:#c9c9c9"></div>
  <svg class="a" style="left:32px;top:5px" width="12" height="12"><rect x="0.5" y="0.5" width="11" height="11" fill="#f6d9a8" stroke="#e0a050"/><path d="M2.5 3.5h1M5 3.5h4.5M2.5 6h1M5 6h4.5M2.5 8.5h1M5 8.5h4.5" stroke="#c07830" stroke-width="1"/></svg>
  <div class="t" style="left:48px;top:5px;color:#111"><span class="u">0</span>: Messages</div>
  <svg class="a" style="left:131px;top:5px" width="12" height="12"><rect x="0.5" y="0.5" width="11" height="11" fill="#d8d8d8" stroke="#8a8a8a"/><rect x="2" y="2" width="8" height="8" fill="#9a9a9a"/><path d="M3 4l2 1.5L3 7" stroke="#fff" stroke-width="0.8" fill="none"/></svg>
  <div class="t" style="left:148px;top:5px;color:#111">Terminal</div>
  <svg class="a" style="left:214px;top:3px" width="14" height="15"><path d="M2.5 5.5a4.5 4.2 0 0 1 9 0z" fill="#8bc34a"/><rect x="2.5" y="6.3" width="9" height="5.5" fill="#8bc34a"/><rect x="0.3" y="6.3" width="1.6" height="4.5" rx="0.8" fill="#8bc34a"/><rect x="12.1" y="6.3" width="1.6" height="4.5" rx="0.8" fill="#8bc34a"/><rect x="4.3" y="11.8" width="1.6" height="3" fill="#8bc34a"/><rect x="8.1" y="11.8" width="1.6" height="3" fill="#8bc34a"/></svg>
  <div class="t" style="left:232px;top:5px;color:#111"><span class="u">6</span>: Android Monitor</div>
  <svg class="a" style="left:354px;top:3px" width="14" height="15"><path d="M0.5 0.5v13l10-6.5z" fill="#3aa346"/><circle cx="11" cy="12" r="2.5" fill="#2e7d32" stroke="#e8e8e8" stroke-width="0.8"/></svg>
  <div class="t" style="left:371px;top:5px;color:#111"><span class="u">4</span>: Run</div>
  <svg class="a" style="left:424px;top:4px" width="15" height="14"><ellipse cx="7.5" cy="8" rx="4.5" ry="5" fill="#3aa346"/><circle cx="7.5" cy="2.8" r="2.3" fill="#3aa346"/><path d="M0 5h3M12 5h3M0 8.5h3M12 8.5h3M0.5 12l2.5-1.5M14.5 12L12 10.5" stroke="#3aa346" stroke-width="1.3"/></svg>
  <div class="t" style="left:442px;top:5px;color:#111"><span class="u">5</span>: Debug</div>
  <svg class="a" style="left:1143px;top:4px" width="14" height="14"><rect x="0" y="0.5" width="11" height="10" rx="2" fill="#e06060"/><path d="M4 10.5h4L5.5 13z" fill="#e06060"/><rect x="4.8" y="2.2" width="1.6" height="4.5" fill="#fff"/><rect x="4.8" y="7.6" width="1.6" height="1.6" fill="#fff"/></svg>
  <div class="t" style="left:1155px;top:6px;color:#111;font-size:11px;font-weight:bold">4</div>
  <div class="t" style="left:1167px;top:5px;color:#111">Event Log</div>
  <svg class="a" style="left:1238px;top:4px" width="12" height="13"><rect x="0.5" y="0.5" width="11" height="12" fill="#e8f0f8" stroke="#5a8fc0"/><path d="M2.5 3.5h7M2.5 6h7M2.5 8.5h5" stroke="#5a8fc0" stroke-width="1"/></svg>
  <div class="t" style="left:1256px;top:5px;color:#111;letter-spacing:-0.1px">Gradle Console</div>
</div>

<!-- ===== STATUS BAR ===== -->
<div class="a" id="status" style="left:0;top:707px;width:1366px;height:21px;background:#e8e8e8">
  <div class="a" style="left:9px;top:4px;width:14px;height:13px;background:#c8c8c8;border:1px solid #8a8a8a"></div>
  <div class="a" style="left:9px;top:18px;width:14px;height:1px;background:#8a8a8a"></div>
  <div class="t" style="left:31px;top:4px;color:#111;letter-spacing:-0.08px">Gradle build finished in 1m 15s 40ms (11 minutes ago)</div>
  <div class="t" style="left:1018px;top:4px;color:#111;letter-spacing:-0.8px">2330:1</div>
  <div class="t" style="left:1063px;top:4px;color:#111;letter-spacing:-1px">CRLF</div>
  <svg class="a" style="left:1092px;top:8px" width="5" height="9"><path d="M0 3.5L2.5 0 5 3.5zM0 5.5L2.5 9 5 5.5z" fill="#333"/></svg>
  <div class="t" style="left:1107px;top:4px;color:#111;letter-spacing:-0.95px">UTF-8</div>
  <svg class="a" style="left:1138px;top:8px" width="5" height="9"><path d="M0 3.5L2.5 0 5 3.5zM0 5.5L2.5 9 5 5.5z" fill="#333"/></svg>
  <div class="t" style="left:1154px;top:4px;color:#9a9a9a;letter-spacing:0.05px">Context: &lt;no context&gt;</div>
  <svg class="a" style="left:1300px;top:5px" width="12" height="12"><path d="M3 5V3a2 2 0 0 1 4 0" stroke="#8a8a8a" stroke-width="1.2" fill="none"/><rect x="2.5" y="5.5" width="8" height="6" fill="none" stroke="#8a8a8a" stroke-width="1.3"/><rect x="5.8" y="7.5" width="1.5" height="2" fill="#8a8a8a"/></svg>
  <svg class="a" style="left:1323px;top:3px" width="14" height="16"><path d="M3 6a4 4 0 0 1 8 0" fill="#8a8a8a"/><rect x="2" y="6" width="10" height="2" fill="#8a8a8a"/><rect x="3" y="8" width="8" height="6" rx="2" fill="none" stroke="#8a8a8a" stroke-width="1.2"/><path d="M5 11h4M1 15h12" stroke="#8a8a8a" stroke-width="1"/></svg>
  <svg class="a" style="left:1347px;top:4px" width="13" height="13"><circle cx="6.5" cy="6.5" r="6.2" fill="#8a8a8a"/><rect x="5.6" y="2.5" width="1.8" height="5.5" fill="#e8e8e8"/><rect x="5.6" y="9" width="1.8" height="1.8" fill="#e8e8e8"/></svg>
</div>

<!-- ===== TASKBAR ===== -->
<div class="a" id="taskbar" style="left:0;top:728px;width:1366px;height:40px;background:linear-gradient(90deg,#0e0e10 0%,#141012 30%,#160f10 45%,#120e0f 60%,#100e0f 100%)">
  <svg class="a" style="left:15px;top:12px" width="18" height="17"><path d="M0 2.4L7 1.4v6.4H0zM8 1.2L18 0v7.8H8zM0 8.8h7v6.6L0 14.5zM8 8.8h10V17L8 15.6z" fill="#fff"/></svg>
  <svg class="a" style="left:62px;top:13px" width="21" height="14"><rect x="5" y="1" width="11" height="12" fill="none" stroke="#fff" stroke-width="1.6"/><path d="M2.5 1.5H0.8v11h1.7M18.5 1.5h1.7v11h-1.7" stroke="#fff" stroke-width="1.3" fill="none"/></svg>
  <svg class="a" style="left:111px;top:10px" width="15" height="21"><path d="M0 1h5l1.5 2H12v15H0z" fill="#e8b830"/><path d="M1.5 3L12 1.5V18L1.5 20z" fill="#f6d872"/></svg>
  <div class="t" style="left:136px;top:13px;color:#f2f2f2">D:\ApostilasAnd...</div>
  <div class="a" style="left:102px;top:38px;width:138px;height:2px;background:#76b3e6"></div>
  <svg class="a" style="left:256px;top:9px" width="22" height="22"><circle cx="11" cy="11" r="10.5" fill="#db4437"/><path d="M11 11L1.9 5.75A10.5 10.5 0 0 0 5.75 20.1z" fill="#0f9d58"/><path d="M11 11L5.75 20.1A10.5 10.5 0 0 0 21.5 11z" fill="#f4c20d"/><path d="M11 11H21.5A10.5 10.5 0 0 0 20.1 5.75z" fill="#f4c20d"/><circle cx="11" cy="11" r="5" fill="#fff"/><circle cx="11" cy="11" r="3.8" fill="#4285f4"/></svg>
  <div class="t" style="left:283px;top:13px;color:#f2f2f2">Recente Android...</div>
  <div class="a" style="left:249px;top:38px;width:138px;height:2px;background:#76b3e6"></div>
  <svg class="a" style="left:403px;top:8px" width="23" height="24" viewBox="0 0 23 24"><circle cx="11" cy="11" r="10.3" fill="#86c24a"/><ellipse cx="11" cy="8.5" rx="2.8" ry="4" fill="#5b6a50"/><path d="M8.8 11.5L4 22.5M15.5 11L18.3 22.5" stroke="#e8f2e0" stroke-width="2"/><path d="M7 16.3Q11.5 18.5 16.5 16" stroke="#e8f2e0" stroke-width="1.8" fill="none"/></svg>
  <div class="t" style="left:430px;top:13px;color:#f2f2f2;letter-spacing:-0.25px">Sensor1 - [C:\Us...</div>
  <div class="a" style="left:396px;top:38px;width:138px;height:2px;background:#76b3e6"></div>
  <svg class="a" style="left:549px;top:9px" width="23" height="23"><path d="M5 1h12l5 5v16H5z" fill="#fff"/><rect x="0" y="2" width="13" height="6" fill="#e03a26"/><text x="2" y="7" font-family="Liberation Sans" font-size="5" font-weight="bold" fill="#fff">PDF</text><path d="M10 19c2-4 4-8 3.5-10-1-1-1.5 2 1 5s5 3 5 3-4-1-9.5 2z" fill="none" stroke="#e03a26" stroke-width="1.2"/></svg>
  <div class="t" style="left:577px;top:13px;color:#f2f2f2;letter-spacing:-0.3px">IPAA-eBook-PR...</div>
  <div class="a" style="left:542px;top:38px;width:139px;height:2px;background:#76b3e6"></div>
  <div class="a" style="left:686px;top:0;width:145px;height:40px;background:linear-gradient(90deg,#4a4444,#4d4a49 60%,#474443)"></div>
  <svg class="a" style="left:697px;top:11px" width="19" height="18"><rect x="0" y="0" width="19" height="18" fill="#3b7fc8"/><rect x="0" y="0" width="19" height="6" fill="#6a98c0"/><path d="M5 6.5a4.5 4.5 0 0 0 9 0z" fill="#fff"/><rect x="7.5" y="5.5" width="4" height="2" fill="#222"/></svg>
  <div class="t" style="left:723px;top:13px;color:#f2f2f2">Vysor</div>
  <div class="a" style="left:686px;top:38px;width:145px;height:2px;background:#8cc6f2"></div>
  <svg class="a" style="left:841px;top:10px" width="24" height="19"><path d="M0 7L12 0l12 7v12H0z" fill="#fff"/><path d="M0 7l12 6 12-6" stroke="#111" stroke-width="1.2" fill="none"/><path d="M7 10l14-3-9 8z" fill="#111"/></svg>
  <div class="t" style="left:870px;top:13px;color:#f2f2f2;letter-spacing:-0.3px">Caixa de entrada ...</div>
  <div class="a" style="left:836px;top:38px;width:137px;height:2px;background:#76b3e6"></div>
  <svg class="a" style="left:990px;top:8px" width="18" height="24"><path d="M2.5 7a6.5 6 0 0 1 13 0z" fill="#8bc34a"/><path d="M4.5 1l1.5 2M13.5 1L12 3" stroke="#8bc34a" stroke-width="1"/><rect x="0" y="9" width="18" height="15" fill="#7a8a9a"/><path d="M9 11v8M5 15.5l4 4 4-4" stroke="#fff" stroke-width="2.5" fill="none"/></svg>
  <div class="t" style="left:1015px;top:13px;color:#f2f2f2;letter-spacing:-0.2px">Android SDK Ma...</div>
  <div class="a" style="left:982px;top:38px;width:138px;height:2px;background:#76b3e6"></div>
  <svg class="a" style="left:1130px;top:13px" width="16" height="15"><rect x="0" y="0" width="15" height="11" fill="#2a5a9a"/><rect x="1" y="1" width="13" height="9" fill="#6aa0e0"/><path d="M3 9l3-5 2 3 2-2 3 4z" fill="#fff"/><rect x="5" y="12" width="5" height="1.5" fill="#aaa"/></svg>
  <svg class="a" style="left:1154px;top:14px" width="17" height="12"><path d="M0 4h3M0 8h3M3 3v6h2V3z" stroke="#fff" stroke-width="1.2" fill="none"/><rect x="5.5" y="1.5" width="10" height="9" fill="none" stroke="#fff" stroke-width="1.3"/><rect x="7" y="3" width="7" height="6" fill="#fff"/><rect x="15.5" y="4.5" width="1.5" height="3" fill="#fff"/></svg>
  <svg class="a" style="left:1181px;top:15px" width="13" height="12"><path d="M1 11a10 10 0 0 1 10-10M3.5 11A7.5 7.5 0 0 1 11 3.5M6 11a5 5 0 0 1 5-5" stroke="#fff" stroke-width="1.2" fill="none"/><rect x="8.5" y="8.5" width="3.5" height="3.5" fill="#fff"/></svg>
  <svg class="a" style="left:1202px;top:13px" width="17" height="14"><path d="M0.5 4.5h3l4-4v13l-4-4h-3z" fill="none" stroke="#fff" stroke-width="1.1"/><path d="M10 4.5a3 3 0 0 1 0 5M12 2.5a6 6 0 0 1 0 9M14 0.8a8.5 8.5 0 0 1 0 12.4" stroke="#fff" stroke-width="1.1" fill="none"/></svg>
  <svg class="a" style="left:1226px;top:12px" width="17" height="16"><path d="M0 0h17v11H10l-2 4-2-4H0z" fill="#fff"/><path d="M3 3h11M3 5.5h11M3 8h7" stroke="#111" stroke-width="1.1"/></svg>
  <div class="t" style="left:1252px;top:4px;color:#f2f2f2;line-height:16px">POR</div>
  <div class="t" style="left:1251px;top:21px;color:#f2f2f2;line-height:16px">INTL</div>
  <div class="t" style="left:1307px;top:4px;color:#f2f2f2;line-height:16px">15:12</div>
  <div class="t" style="left:1291px;top:21px;color:#f2f2f2;line-height:16px">24/06/2016</div>
  <div class="a" style="left:1361px;top:0;width:1px;height:40px;background:#5a5a5a"></div>
</div>

<!-- ===== VYSOR WINDOW ===== -->
<div class="a" id="vysor" style="left:493px;top:0;width:363px;height:721px;background:#fff;border:1px solid #3a72a8;box-shadow:-1px 0 0 #b8dcf2, 0 3px 12px rgba(0,0,0,0.32)">
  <div class="a" style="left:242px;top:14px;width:10px;height:1px;background:#000"></div>
  <div class="a" style="left:287px;top:9px;width:10px;height:10px;border:1px solid #000"></div>
  <svg class="a" style="left:333px;top:9px" width="11" height="11"><path d="M0.5 0.5L10.5 10.5M10.5 0.5L0.5 10.5" stroke="#000" stroke-width="1.05"/></svg>
  <div class="a" style="left:0;top:30px;width:361px;height:25px;background:#3b78b3"></div>
  <div class="a" style="left:0;top:55px;width:361px;height:19px;background:#62a0d6"></div>
  <div class="a" style="left:12px;top:35px;width:6px;height:15px;background:#5a93c8"></div>
  <div class="a" style="left:19px;top:35px;width:6px;height:15px;background:#5a93c8"></div>
  <div class="t" style="left:24px;top:43px;font-size:14px;line-height:16px;color:#dde7f0;-webkit-text-stroke:0.35px #dde7f0">Vysor  -  Medfield75040512</div>
  <div class="t" style="left:317px;top:34px;font-size:15px;line-height:17px;color:#5590c8">15:11</div>
  <div class="a" style="left:204px;top:30px;width:110px;height:22px;background:#cdcdcd;border-radius:0 0 3px 3px;box-shadow:0 1px 1px rgba(0,0,0,0.15)"></div>
  <div class="a" style="left:226px;top:30px;width:1px;height:22px;background:#e2e2e2"></div>
  <div class="a" style="left:245px;top:30px;width:1px;height:22px;background:#e2e2e2"></div>
  <div class="a" style="left:266px;top:30px;width:1px;height:22px;background:#e2e2e2"></div>
  <div class="a" style="left:289px;top:30px;width:1px;height:22px;background:#e2e2e2"></div>
  <svg class="a" style="left:209px;top:35.5px" width="12" height="11"><circle cx="6" cy="5.5" r="3.6" fill="none" stroke="#111" stroke-width="3" stroke-dasharray="1.9 0.95"/><circle cx="6" cy="5.5" r="3" fill="#111"/><circle cx="6" cy="5.5" r="1.2" fill="#cdcdcd"/></svg>
  <svg class="a" style="left:230px;top:36px" width="10" height="12"><path d="M2 0h6v1.5H7v3l2 2v1H1v-1l2-2v-3H2z" fill="#111"/><rect x="4.4" y="7.5" width="1.2" height="4" fill="#555"/></svg>
  <svg class="a" style="left:249.5px;top:36px" width="11" height="11"><path d="M1.5 1.5L9.5 9.5M9.5 1.5L1.5 9.5" stroke="#111" stroke-width="1.5"/><path d="M0 0h4L0 4zM11 0H7l4 4zM0 11h4L0 7zM11 11H7l4-4z" fill="#111"/></svg>
  <svg class="a" style="left:270.5px;top:37px" width="14" height="8"><rect x="0.5" y="0.5" width="13" height="7" fill="none" stroke="#555" stroke-width="1"/><path d="M2 2.5h10M2 4.5h10" stroke="#777" stroke-width="0.8" stroke-dasharray="1 0.6"/></svg>
  <svg class="a" style="left:295px;top:35px" width="14" height="11"><path d="M0 2.5h3.5L5 0.5h4l1.5 2H14V11H0z" fill="#111"/><circle cx="7" cy="6.3" r="2.8" fill="#cdcdcd"/><circle cx="7" cy="6.3" r="1.6" fill="#111"/></svg>
  <div class="a" style="left:204px;top:53px;width:19px;height:20.5px;background:#fff"></div>
  <div class="a" style="left:224px;top:53px;width:22px;height:20.5px;background:#fff"></div>
  <div class="a" style="left:251px;top:53px;width:21px;height:20.5px;background:#fff"></div>
  <div class="a" style="left:273px;top:53px;width:21px;height:20.5px;background:#fff"></div>
  <svg class="a" style="left:209.5px;top:58.5px" width="9" height="9"><path d="M0 3h2.5L6 0v9L2.5 6H0z" fill="#444"/><path d="M7.3 3.3a1.8 1.8 0 0 1 0 2.4" stroke="#777" stroke-width="0.8" fill="none"/></svg>
  <svg class="a" style="left:228.5px;top:58.5px" width="12" height="9"><path d="M0 3h2.5L6 0v9L2.5 6H0z" fill="#444"/><path d="M7.3 3a2 2 0 0 1 0 3M9 1.8a3.8 3.8 0 0 1 0 5.4M10.7 0.8a5.5 5.5 0 0 1 0 7.4" stroke="#555" stroke-width="0.8" fill="none"/></svg>
  <svg class="a" style="left:257px;top:57.5px" width="11" height="11"><path d="M9.3 6A4.2 4.2 0 1 1 7.5 2.2" stroke="#333" stroke-width="1.4" fill="none"/><path d="M6 0l4 2.3-3.5 2.2z" fill="#333"/></svg>
  <svg class="a" style="left:278px;top:57px" width="11" height="11"><path d="M3 2.8A4.3 4.3 0 1 0 8 2.8" stroke="#333" stroke-width="1.3" fill="none"/><path d="M5.5 0v5" stroke="#333" stroke-width="1.3"/></svg>
  <div class="a" style="left:0;top:74px;width:361px;height:549px;background:#f8f8f8"></div>
  <div class="a" style="left:360px;top:74px;width:1px;height:549px;background:#e4f8fc"></div>
  <div class="t" style="left:16.5px;top:73.85px;font-size:14px;line-height:16px;color:#858585">Valores do Magnetometro e Acelerometro</div>
  <div class="t" style="left:16.5px;top:107.15px;font-size:14px;line-height:16px;color:#858585">Eixo X: 0.1176798</div>
  <div class="t" style="left:16.5px;top:126.65px;font-size:14px;line-height:16px;color:#858585">Eixo Y: -0.5982056</div>
  <div class="t" style="left:16.5px;top:145.95px;font-size:14px;line-height:16px;color:#858585">Eixo Z: -10.463696</div>
  <div class="t" style="left:16.5px;top:165.15px;font-size:14px;line-height:16px;color:#858585">Orientação X: 154.36076</div>
  <div class="t" style="left:16.5px;top:184.65px;font-size:14px;line-height:16px;color:#858585">Orientação Y: -3.1875</div>
  <div class="t" style="left:16.5px;top:204.25px;font-size:14px;line-height:16px;color:#858585">Orientação Z: 0.59375</div>
  <div class="t" style="left:16.5px;top:248.05px;font-size:14px;line-height:16px;color:#858585">Valores do sensor de Luminosidade</div>
  <div class="t" style="left:16.5px;top:290.55px;font-size:14px;line-height:16px;color:#858585">Lumens</div>
  <div class="a" style="left:0;top:623px;width:361px;height:48px;background:#000"></div>
  <svg class="a" style="left:62px;top:639px" width="36" height="20"><path d="M8 1L2 6l6 5" stroke="#9a9a9a" stroke-width="2.2" fill="none"/><path d="M2.5 6H27a5.8 5.8 0 0 1 0 11.6H15" stroke="#9a9a9a" stroke-width="2.2" fill="none"/></svg>
  <svg class="a" style="left:161.5px;top:637.5px" width="38" height="21"><path d="M1.2 19.8V8.5L19 1.3l17.8 7.2v11.3z" stroke="#9a9a9a" stroke-width="2.2" fill="none"/></svg>
  <svg class="a" style="left:264.5px;top:639.5px" width="35" height="19"><rect x="1.1" y="7.1" width="26.5" height="10.8" stroke="#9a9a9a" stroke-width="2.2" fill="none"/><path d="M6 2.1h27.3v11.5" stroke="#9a9a9a" stroke-width="2.2" fill="none"/></svg>
  <div class="a" style="left:0;top:671px;width:361px;height:48px;background:#478ecd"></div>
  <svg class="a" style="left:54px;top:685px" width="14" height="18"><path d="M11 1.8L4 9l7 7.2" stroke="#fff" stroke-width="3.6" fill="none"/></svg>
  <svg class="a" style="left:171.5px;top:685.5px" width="18" height="18"><circle cx="9" cy="9" r="7.3" stroke="#fff" stroke-width="2.8" fill="none"/></svg>
  <svg class="a" style="left:291.5px;top:687px" width="18" height="15"><path d="M0 1.4h18M0 7.2h18M0 13h18" stroke="#fff" stroke-width="2.6"/></svg>
</div>

</body></html>
